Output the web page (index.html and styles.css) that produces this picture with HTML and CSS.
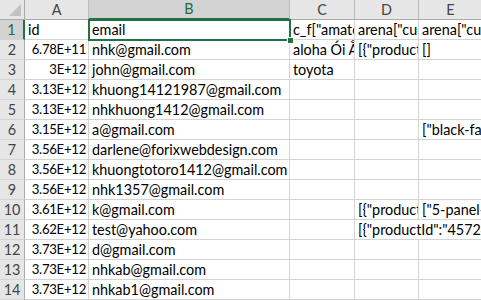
FILE: index.html
```html
<!DOCTYPE html>
<html lang="en">
<head>
<meta charset="utf-8">
<title>export.csv</title>
<link rel="stylesheet" href="styles.css">
</head>
<body>
<div class="sheet">
  <div class="corner"><span class="corner-mark"></span></div>
  <div class="colhead">A</div>
  <div class="colhead is-sel">B</div>
  <div class="colhead">C</div>
  <div class="colhead">D</div>
  <div class="colhead last">E</div>

  <div class="rowhead is-sel">1</div>
  <div class="cell">id</div>
  <div class="cell active">email</div>
  <div class="cell">c_f["amateur"]</div>
  <div class="cell">arena["customer"]</div>
  <div class="cell last">arena["cushion"]</div>

  <div class="rowhead">2</div>
  <div class="cell num">6.78E+11</div>
  <div class="cell">nhk@gmail.com</div>
  <div class="cell">aloha Ói Ằ</div>
  <div class="cell">[{"productId":"3951"}]</div>
  <div class="cell last">[]</div>

  <div class="rowhead">3</div>
  <div class="cell num">3E+12</div>
  <div class="cell">john@gmail.com</div>
  <div class="cell">toyota</div>
  <div class="cell"></div>
  <div class="cell last"></div>

  <div class="rowhead">4</div>
  <div class="cell num">3.13E+12</div>
  <div class="cell">khuong14121987@gmail.com</div>
  <div class="cell"></div>
  <div class="cell"></div>
  <div class="cell last"></div>

  <div class="rowhead">5</div>
  <div class="cell num">3.13E+12</div>
  <div class="cell">nhkhuong1412@gmail.com</div>
  <div class="cell"></div>
  <div class="cell"></div>
  <div class="cell last"></div>

  <div class="rowhead">6</div>
  <div class="cell num">3.15E+12</div>
  <div class="cell">a@gmail.com</div>
  <div class="cell"></div>
  <div class="cell"></div>
  <div class="cell last">["black-fashion"]</div>

  <div class="rowhead">7</div>
  <div class="cell num">3.56E+12</div>
  <div class="cell">darlene@forixwebdesign.com</div>
  <div class="cell"></div>
  <div class="cell"></div>
  <div class="cell last"></div>

  <div class="rowhead">8</div>
  <div class="cell num">3.56E+12</div>
  <div class="cell">khuongtotoro1412@gmail.com</div>
  <div class="cell"></div>
  <div class="cell"></div>
  <div class="cell last"></div>

  <div class="rowhead">9</div>
  <div class="cell num">3.56E+12</div>
  <div class="cell">nhk1357@gmail.com</div>
  <div class="cell"></div>
  <div class="cell"></div>
  <div class="cell last"></div>

  <div class="rowhead">10</div>
  <div class="cell num">3.61E+12</div>
  <div class="cell">k@gmail.com</div>
  <div class="cell"></div>
  <div class="cell">[{"productId":"45311"}]</div>
  <div class="cell last">["5-panel-cap"]</div>

  <div class="rowhead">11</div>
  <div class="cell num">3.62E+12</div>
  <div class="cell">test@yahoo.com</div>
  <div class="cell"></div>
  <div class="cell spill">[{"productId":"45724"}]</div>
  <div class="cell last"></div>

  <div class="rowhead">12</div>
  <div class="cell num">3.73E+12</div>
  <div class="cell">d@gmail.com</div>
  <div class="cell"></div>
  <div class="cell"></div>
  <div class="cell last"></div>

  <div class="rowhead">13</div>
  <div class="cell num">3.73E+12</div>
  <div class="cell">nhkab@gmail.com</div>
  <div class="cell"></div>
  <div class="cell"></div>
  <div class="cell last"></div>

  <div class="rowhead">14</div>
  <div class="cell num">3.73E+12</div>
  <div class="cell">nhkab1@gmail.com</div>
  <div class="cell"></div>
  <div class="cell"></div>
  <div class="cell last"></div>
</div>
</body>
</html>
```

FILE: styles.css
```css
html, body {
  margin: 0;
  padding: 0;
  background: #ffffff;
  overflow: hidden;
}

.sheet {
  display: grid;
  grid-template-columns: 25px 64px 201px 65px 64px 64px;
  grid-auto-rows: 20px;
  font-family: Lato, "Liberation Sans", sans-serif;
  font-size: 14.4px;
  color: #000000;
}

/* header strip and row numbers */
.corner,
.colhead,
.rowhead {
  background: #e6e6e6;
  color: #444444;
  box-sizing: border-box;
  line-height: 19px;
  text-align: center;
}

.corner {
  position: relative;
  border-right: 1px solid #ababab;
  border-bottom: 1px solid #ababab;
}

.corner-mark {
  position: absolute;
  right: 3px;
  bottom: 3px;
  width: 0;
  height: 0;
  border-left: 12px solid transparent;
  border-bottom: 12px solid #c2c2c2;
}

.colhead {
  border-right: 1px solid #bcbcbc;
  border-bottom: 1px solid #ababab;
}

.rowhead {
  border-right: 1px solid #ababab;
  border-bottom: 1px solid #d4d4d4;
}

.colhead.is-sel {
  background: #d2d2d2;
  color: #1f6b3f;
  border-bottom: 2px solid #217346;
  line-height: 18px;
}

.rowhead.is-sel {
  background: #d2d2d2;
  color: #1f6b3f;
  border-right: 2px solid #217346;
}

/* data cells */
.cell {
  box-sizing: border-box;
  border-right: 1px solid #d4d4d4;
  border-bottom: 1px solid #d4d4d4;
  padding: 0 3px;
  line-height: 19px;
  white-space: nowrap;
  overflow: hidden;
}

.cell.num {
  text-align: right;
  padding-right: 2px;
  font-size: 13.2px;
  letter-spacing: -0.3px;
}

.cell.spill {
  overflow: visible;
  border-right-color: transparent;
}

.cell.last {
  overflow: visible;
}

/* active cell frame with fill handle */
.cell.active {
  position: relative;
  overflow: visible;
}

.cell.active::after {
  content: "";
  position: absolute;
  top: -1px;
  left: -1px;
  right: -2px;
  bottom: -2px;
  border: 2px solid #217346;
  pointer-events: none;
}

.cell.active::before {
  content: "";
  position: absolute;
  right: -5px;
  bottom: -5px;
  width: 5px;
  height: 5px;
  background: #217346;
  border: 1px solid #ffffff;
  z-index: 1;
}
```
